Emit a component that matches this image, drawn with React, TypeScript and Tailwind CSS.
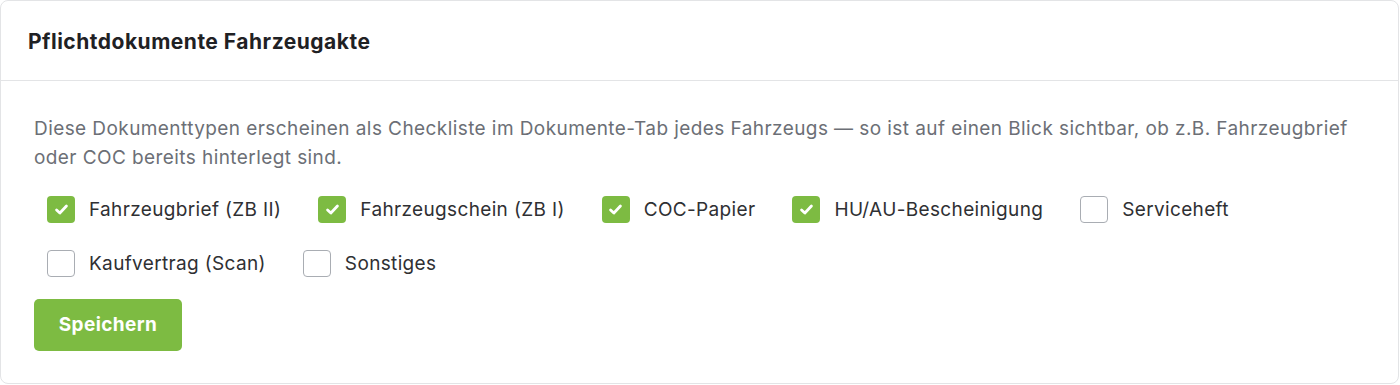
import React, { useState } from 'react';

const docTypes = [
  { id: 'zb2', label: 'Fahrzeugbrief (ZB II)', checked: true },
  { id: 'zb1', label: 'Fahrzeugschein (ZB I)', checked: true },
  { id: 'coc', label: 'COC-Papier', checked: true },
  { id: 'hu', label: 'HU/AU-Bescheinigung', checked: true },
  { id: 'service', label: 'Serviceheft', checked: false },
  { id: 'kauf', label: 'Kaufvertrag (Scan)', checked: false },
  { id: 'sonst', label: 'Sonstiges', checked: false },
];

const CheckItem: React.FC<{ label: string; checked: boolean; onToggle: () => void }> = ({ label, checked, onToggle }) => (
  <label className="flex items-center gap-[14px] cursor-pointer select-none" onClick={onToggle}>
    {checked ? (
      <span className="w-[28px] h-[27px] rounded-[4px] bg-[#7dbb42] flex items-center justify-center">
        <svg width="15" height="15" viewBox="0 0 14 14" fill="none">
          <path d="M2.4 7.4 L5.5 10.3 L11.6 3.7" stroke="white" strokeWidth="2.6" strokeLinecap="round" strokeLinejoin="round" />
        </svg>
      </span>
    ) : (
      <span className="w-[28px] h-[27px] rounded-[4px] border border-[#a9adb3] bg-white" />
    )}
    <span className="text-[19px] tracking-[0.35px] text-[#2f3033] leading-[27px]">{label}</span>
  </label>
);

export default function App() {
  const [items, setItems] = useState(docTypes);
  const toggle = (id: string) =>
    setItems((prev) => prev.map((d) => (d.id === id ? { ...d, checked: !d.checked } : d)));

  return (
    <div className="bg-white w-[1400px] h-[385px]" style={{ fontFamily: 'Inter, "Noto Sans", sans-serif' }}>
      <div className="w-[1399px] h-[384px] border border-[#e3e4e6] rounded-[8px] bg-white">
        <div className="h-[80px] border-b border-[#e3e4e6] px-[27px] flex items-center">
          <h2 className="text-[21px] tracking-[0.5px] font-bold text-[#1f2124] pt-[3px]">Pflichtdokumente Fahrzeugakte</h2>
        </div>
        <div className="px-[33px] pt-[33px]">
          <p className="text-[19px] tracking-[0.42px] leading-[29px] text-[#6c6f76]">
            Diese Dokumenttypen erscheinen als Checkliste im Dokumente-Tab jedes Fahrzeugs — so ist auf einen Blick sichtbar, ob z.B. Fahrzeugbrief oder COC bereits hinterlegt sind.
          </p>
          <div className="flex flex-wrap gap-x-[37px] gap-y-[27px] pl-[13px] pt-[24px] pr-[120px]">
            {items.map((d) => (
              <CheckItem key={d.id} label={d.label} checked={d.checked} onToggle={() => toggle(d.id)} />
            ))}
          </div>
          <button className="mt-[22px] w-[148px] h-[52px] rounded-[5px] bg-[#7dbb42] text-white text-[19px] tracking-[0.4px] font-bold">
            Speichern
          </button>
        </div>
      </div>
    </div>
  );
}
